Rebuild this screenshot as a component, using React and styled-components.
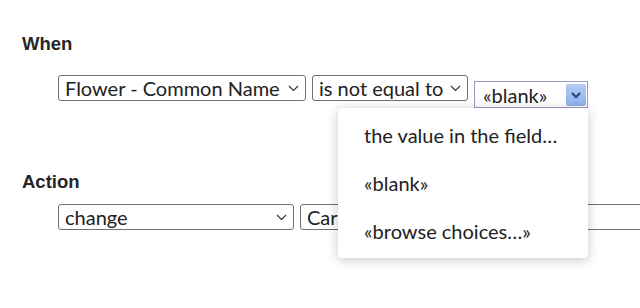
import React from "react";
import styled, { createGlobalStyle } from "styled-components";

const GlobalStyle = createGlobalStyle`
  html, body {
    margin: 0;
    padding: 0;
    background: #fff;
    overflow: hidden;
  }
  body {
    width: 640px;
    height: 308px;
  }
`;

const Page = styled.div`
  box-sizing: border-box;
  width: 640px;
  height: 308px;
  overflow: hidden;
  padding: 33px 0 0 22px;
  font-family: "Lato", "Open Sans", sans-serif;
  color: #222;
`;

const Section = styled.div`
  margin-bottom: ${props => props.gap || 0}px;
`;

const Label = styled.div`
  font-family: "Liberation Sans", Arial, sans-serif;
  font-weight: bold;
  font-size: 18.5px;
  line-height: 22px;
  color: #262626;
`;

const Row = styled.div`
  display: flex;
  align-items: flex-start;
  gap: 6px;
  margin: ${props => props.top}px 0 0 36px;
  white-space: nowrap;
`;

const Select = styled.div`
  position: relative;
  display: flex;
  align-items: center;
  box-sizing: border-box;
  height: 26px;
  width: ${props => props.width}px;
  flex-shrink: 0;
  padding: 0 6px 0 6px;
  border: 1px solid #6f6f6f;
  border-radius: 3px;
  font-size: 20px;
  background: #fff;
  overflow: hidden;
`;

const SelectText = styled.span`
  flex: 1;
  overflow: hidden;
`;

const Chevron = () => (
  <svg width="11" height="7" viewBox="0 0 11 7">
    <path d="M1 1 L5.5 5.5 L10 1" fill="none" stroke="#333" strokeWidth="1.1" />
  </svg>
);

const Combo = styled.div`
  position: relative;
  margin-top: 6px;
`;

const ComboBox = styled.div`
  display: flex;
  align-items: center;
  box-sizing: border-box;
  width: 114px;
  height: 27px;
  padding: 0 1px 0 8px;
  border: 1px solid #9b99c2;
  font-size: 20px;
  background: #fff;
`;

const ComboButton = styled.div`
  margin-left: auto;
  width: 20px;
  height: 22px;
  display: flex;
  align-items: center;
  justify-content: center;
  background: linear-gradient(#b3cbf3, #8fb0ea);
  border-radius: 2px;
`;

const Menu = styled.div`
  position: absolute;
  top: 27px;
  right: 0;
  width: 250px;
  box-sizing: border-box;
  padding: 3px 0;
  background: #fff;
  border-radius: 4px;
  box-shadow: 0 2px 12px rgba(0, 0, 0, 0.22);
  z-index: 5;
`;

const MenuItem = styled.div`
  height: 48px;
  line-height: 48px;
  padding-left: 26px;
  font-size: 20px;
  color: #222;
`;

const choices = ["the value in the field…", "«blank»", "«browse choices…»"];

export default function App() {
  return (
    <>
      <GlobalStyle />
      <Page>
        <Section gap={63}>
          <Label>When</Label>
          <Row top={20}>
            <Select width={248}>
              <SelectText>Flower - Common Name</SelectText>
              <Chevron />
            </Select>
            <Select width={156}>
              <SelectText>is not equal to</SelectText>
              <Chevron />
            </Select>
            <Combo>
              <ComboBox>
                «blank»
                <ComboButton>
                  <svg width="12" height="8" viewBox="0 0 12 8">
                    <path d="M2 2 L6 6 L10 2" fill="none" stroke="#2d4e8f" strokeWidth="2.4" />
                  </svg>
                </ComboButton>
              </ComboBox>
              <Menu>
                {choices.map(c => (
                  <MenuItem key={c}>{c}</MenuItem>
                ))}
              </Menu>
            </Combo>
          </Row>
        </Section>
        <Section>
          <Label>Action</Label>
          <Row top={11}>
            <Select width={236}>
              <SelectText>change</SelectText>
              <Chevron />
            </Select>
            <Select width={420}>
              <SelectText>Card Color</SelectText>
            </Select>
          </Row>
        </Section>
      </Page>
    </>
  );
}
